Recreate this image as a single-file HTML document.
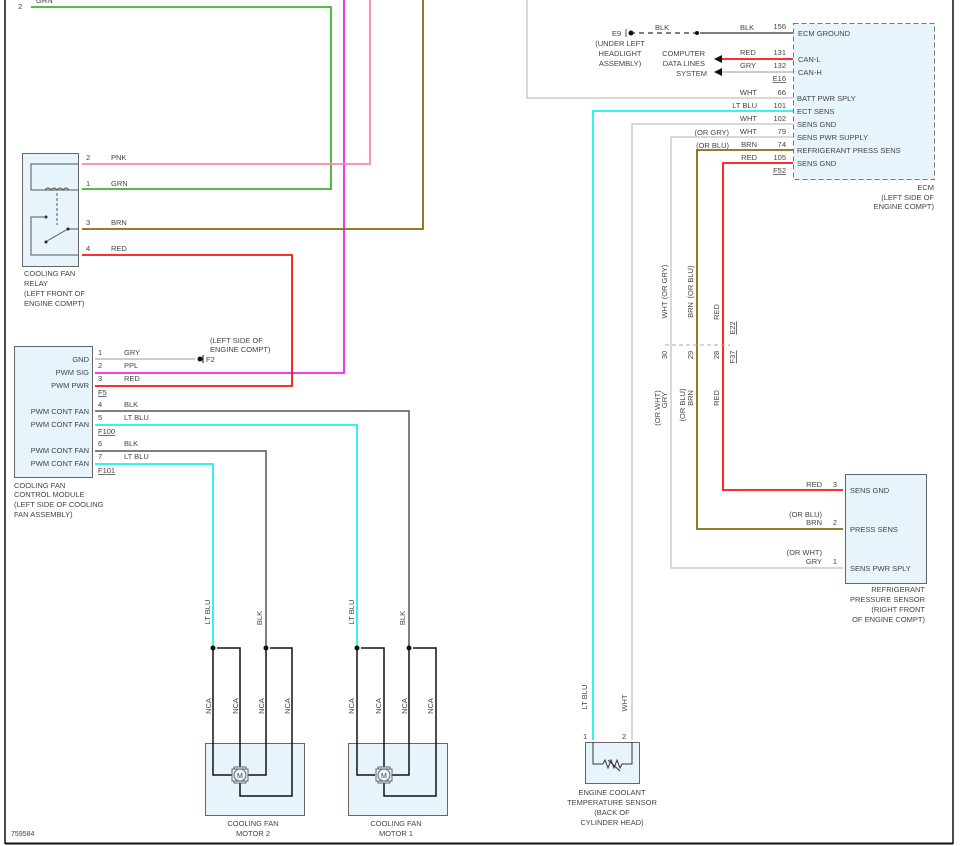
<!DOCTYPE html>
<html><head><meta charset="utf-8"><style>
html,body{margin:0;padding:0;background:#fff;}
svg{display:block;}
text{font-family:"Liberation Sans",sans-serif;font-size:7.5px;fill:#444;}
</style></head><body>
<svg width="967" height="846" viewBox="0 0 967 846" xmlns="http://www.w3.org/2000/svg">
<!-- frame -->
<line x1="5" y1="0" x2="5" y2="844" stroke="#111" stroke-width="1.5"/>
<line x1="953" y1="0" x2="953" y2="844" stroke="#111" stroke-width="1.5"/>
<line x1="5" y1="843.5" x2="953" y2="843.5" stroke="#111" stroke-width="2"/>

<!-- top-left wires -->
<text x="18" y="9">2</text><text x="36" y="3">GRN</text>
<polyline points="31,7 331,7 331,189 82,189" fill="none" stroke="#3cb52a" stroke-width="1.8"/>
<polyline points="344,0 344,373 95,373" fill="none" stroke="#ee22ee" stroke-width="1.8"/>
<polyline points="370,0 370,164 82,164" fill="none" stroke="#ff88aa" stroke-width="1.8"/>
<polyline points="423,0 423,229 82,229" fill="none" stroke="#8a6a10" stroke-width="1.8"/>
<polyline points="82,255 292,255 292,386 95,386" fill="none" stroke="#ff1111" stroke-width="1.8"/>

<!-- relay -->
<rect x="22.5" y="153.5" width="56" height="113" fill="#e8f4fb" stroke="#666"/>
<polyline points="78,164 31,164 31,190 78,190" fill="none" stroke="#555"/>
<path d="M45,190 q3,-4 6,0 q3,-4 6,0 q3,-4 6,0 q3,-4 6,0" fill="none" stroke="#555"/>
<line x1="57" y1="193" x2="57" y2="225" stroke="#555" stroke-dasharray="3,2"/>
<polyline points="78,229 68,229 47,241" fill="none" stroke="#555"/>
<circle cx="68" cy="229" r="1.5" fill="#222"/><circle cx="46" cy="242" r="1.5" fill="#222"/><circle cx="46" cy="217" r="1.5" fill="#222"/>
<polyline points="46,217 31,217 31,255 78,255" fill="none" stroke="#555"/>
<text x="86" y="160">2</text><text x="111" y="160">PNK</text>
<text x="86" y="186">1</text><text x="111" y="186">GRN</text>
<text x="86" y="225">3</text><text x="111" y="225">BRN</text>
<text x="86" y="251">4</text><text x="111" y="251">RED</text>
<text x="24" y="276">COOLING FAN</text><text x="24" y="286">RELAY</text>
<text x="24" y="296">(LEFT FRONT OF</text><text x="24" y="306">ENGINE COMPT)</text>

<!-- module -->
<rect x="14.5" y="346.5" width="78" height="131" fill="#e8f4fb" stroke="#666"/>
<line x1="95" y1="359" x2="195" y2="359" stroke="#bbb" stroke-width="1.5"/>
<circle cx="200" cy="359" r="2.5" fill="#111"/><line x1="203" y1="355" x2="203" y2="363" stroke="#111"/>
<text x="206" y="362">F2</text>
<text x="210" y="343">(LEFT SIDE OF</text><text x="210" y="352">ENGINE COMPT)</text>
<polyline points="95,411 409,411 409,648" fill="none" stroke="#555" stroke-width="1.5"/>
<polyline points="95,425 357,425 357,648" fill="none" stroke="#22eeee" stroke-width="1.8"/>
<polyline points="95,451 266,451 266,648" fill="none" stroke="#555" stroke-width="1.5"/>
<polyline points="95,464 213,464 213,648" fill="none" stroke="#22eeee" stroke-width="1.8"/>
<g text-anchor="end"><text x="89" y="362">GND</text><text x="89" y="375">PWM SIG</text><text x="89" y="388">PWM PWR</text>
<text x="89" y="414">PWM CONT FAN</text><text x="89" y="427">PWM CONT FAN</text>
<text x="89" y="453">PWM CONT FAN</text><text x="89" y="466">PWM CONT FAN</text></g>
<text x="98" y="355">1</text><text x="124" y="355">GRY</text>
<text x="98" y="368">2</text><text x="124" y="368">PPL</text>
<text x="98" y="381">3</text><text x="124" y="381">RED</text>
<text x="98" y="395" text-decoration="underline">F5</text>
<text x="98" y="407">4</text><text x="124" y="407">BLK</text>
<text x="98" y="420">5</text><text x="124" y="420">LT BLU</text>
<text x="98" y="434" text-decoration="underline">F100</text>
<text x="98" y="446">6</text><text x="124" y="446">BLK</text>
<text x="98" y="459">7</text><text x="124" y="459">LT BLU</text>
<text x="98" y="473" text-decoration="underline">F101</text>
<text x="14" y="488">COOLING FAN</text><text x="14" y="497">CONTROL MODULE</text>
<text x="14" y="507">(LEFT SIDE OF COOLING</text><text x="14" y="517">FAN ASSEMBLY)</text>

<!-- motors -->
<g id="m2">
<rect x="205.5" y="743.5" width="99" height="72" fill="#e8f4fb" stroke="#666"/>
<polyline points="213,648 213,775 232,775" fill="none" stroke="#111" stroke-width="1.5"/>
<polyline points="217,648 240,648 240,767" fill="none" stroke="#111" stroke-width="1.5"/>
<polyline points="266,648 266,775 248,775" fill="none" stroke="#111" stroke-width="1.5"/>
<polyline points="270,648 292,648 292,796 240,796 240,783" fill="none" stroke="#111" stroke-width="1.5"/>
<circle cx="213" cy="648" r="2.5" fill="#111"/><circle cx="266" cy="648" r="2.5" fill="#111"/>
<rect x="234" y="767" width="12" height="16" fill="#e8f4fb" stroke="#666"/>
<rect x="232" y="769" width="16" height="12" fill="#e8f4fb" stroke="#666"/>
<circle cx="240" cy="775" r="6" fill="#e8f4fb" stroke="#666"/>
<text x="237" y="778" style="font-size:7px">M</text>
<g style="font-size:7px">
<text transform="translate(210,612) rotate(-90)" text-anchor="middle">LT BLU</text>
<text transform="translate(262,618) rotate(-90)" text-anchor="middle">BLK</text>
<text transform="translate(211,706) rotate(-90)" text-anchor="middle">NCA</text>
<text transform="translate(238,706) rotate(-90)" text-anchor="middle">NCA</text>
<text transform="translate(264,706) rotate(-90)" text-anchor="middle">NCA</text>
<text transform="translate(290,706) rotate(-90)" text-anchor="middle">NCA</text>
</g>
<text x="253" y="826" text-anchor="middle">COOLING FAN</text><text x="253" y="836" text-anchor="middle">MOTOR 2</text>
</g>
<g transform="translate(143,0)">
<rect x="205.5" y="743.5" width="99" height="72" fill="#e8f4fb" stroke="#666"/>
<polyline points="214,648 214,775 232,775" fill="none" stroke="#111" stroke-width="1.5"/>
<polyline points="218,648 241,648 241,767" fill="none" stroke="#111" stroke-width="1.5"/>
<polyline points="266,648 266,775 249,775" fill="none" stroke="#111" stroke-width="1.5"/>
<polyline points="270,648 293,648 293,796 241,796 241,783" fill="none" stroke="#111" stroke-width="1.5"/>
<circle cx="214" cy="648" r="2.5" fill="#111"/><circle cx="266" cy="648" r="2.5" fill="#111"/>
<rect x="235" y="767" width="12" height="16" fill="#e8f4fb" stroke="#666"/>
<rect x="233" y="769" width="16" height="12" fill="#e8f4fb" stroke="#666"/>
<circle cx="241" cy="775" r="6" fill="#e8f4fb" stroke="#666"/>
<text x="238" y="778" style="font-size:7px">M</text>
<g style="font-size:7px">
<text transform="translate(211,612) rotate(-90)" text-anchor="middle">LT BLU</text>
<text transform="translate(262,618) rotate(-90)" text-anchor="middle">BLK</text>
<text transform="translate(211,706) rotate(-90)" text-anchor="middle">NCA</text>
<text transform="translate(238,706) rotate(-90)" text-anchor="middle">NCA</text>
<text transform="translate(264,706) rotate(-90)" text-anchor="middle">NCA</text>
<text transform="translate(290,706) rotate(-90)" text-anchor="middle">NCA</text>
</g>
<text x="253" y="826" text-anchor="middle">COOLING FAN</text><text x="253" y="836" text-anchor="middle">MOTOR 1</text>
</g>
<text x="11" y="836" style="font-size:7px">759584</text>

<!-- ECM -->
<polyline points="527,0 527,98 793,98" fill="none" stroke="#ccc" stroke-width="1.5"/>
<rect x="793.5" y="23.5" width="141" height="156" fill="#e8f4fb" stroke="#777" stroke-dasharray="5,3"/>
<line x1="630" y1="33" x2="700" y2="33" stroke="#555" stroke-width="1.5" stroke-dasharray="5,4"/>
<line x1="700" y1="33" x2="793" y2="33" stroke="#555" stroke-width="1.5"/>
<circle cx="631" cy="33" r="2.5" fill="#111"/><circle cx="697" cy="33" r="2" fill="#111"/>
<line x1="626" y1="29" x2="626" y2="37" stroke="#555"/>
<text x="612" y="36">E9</text>
<text x="620" y="46" text-anchor="middle">(UNDER LEFT</text><text x="620" y="56" text-anchor="middle">HEADLIGHT</text><text x="620" y="66" text-anchor="middle">ASSEMBLY)</text>
<text x="655" y="30">BLK</text><text x="740" y="30">BLK</text>
<line x1="720" y1="59" x2="793" y2="59" stroke="#ff1111" stroke-width="1.8"/>
<line x1="720" y1="72" x2="793" y2="72" stroke="#bbb" stroke-width="1.5"/>
<polygon points="714,59 722,55 722,63" fill="#111"/><polygon points="714,72 722,68 722,76" fill="#111"/>
<g text-anchor="end"><text x="705" y="56">COMPUTER</text><text x="705" y="66">DATA LINES</text><text x="707" y="76">SYSTEM</text></g>
<text x="740" y="55">RED</text><text x="740" y="68">GRY</text>
<g text-anchor="end">
<text x="786" y="29">156</text><text x="786" y="55">131</text><text x="786" y="68">132</text>
<text x="786" y="81" text-decoration="underline">E16</text>
<text x="786" y="95">66</text><text x="786" y="108">101</text><text x="786" y="121">102</text>
<text x="786" y="134">79</text><text x="786" y="147">74</text><text x="786" y="160">105</text>
<text x="786" y="173" text-decoration="underline">F52</text>
<text x="757" y="95">WHT</text><text x="757" y="108">LT BLU</text><text x="757" y="121">WHT</text>
<text x="757" y="134">WHT</text><text x="757" y="147">BRN</text><text x="757" y="160">RED</text>
<text x="729" y="135">(OR GRY)</text><text x="729" y="148">(OR BLU)</text>
<text x="934" y="190">ECM</text><text x="934" y="200">(LEFT SIDE OF</text><text x="934" y="209">ENGINE COMPT)</text>
</g>
<text x="798" y="36">ECM GROUND</text><text x="798" y="62">CAN-L</text><text x="798" y="75">CAN-H</text>
<text x="797" y="101">BATT PWR SPLY</text><text x="797" y="114">ECT SENS</text><text x="797" y="127">SENS GND</text>
<text x="797" y="140">SENS PWR SUPPLY</text><text x="797" y="153">REFRIGERANT PRESS SENS</text><text x="797" y="166">SENS GND</text>

<polyline points="793,111 593,111 593,740" fill="none" stroke="#22eeee" stroke-width="1.8"/>
<polyline points="793,124 632,124 632,740" fill="none" stroke="#ccc" stroke-width="1.5"/>
<polyline points="793,137 671,137 671,568 843,568" fill="none" stroke="#ccc" stroke-width="1.5"/>
<polyline points="793,150 697,150 697,529 843,529" fill="none" stroke="#8a6a10" stroke-width="1.8"/>
<polyline points="793,163 723,163 723,490 843,490" fill="none" stroke="#ff1111" stroke-width="1.8"/>
<line x1="665" y1="345" x2="730" y2="345" stroke="#aaa" stroke-dasharray="4,3"/>
<g style="font-size:7.5px">
<text transform="translate(667,310) rotate(-90)" text-anchor="middle">WHT</text>
<text transform="translate(667,282) rotate(-90)" text-anchor="middle">(OR GRY)</text>
<text transform="translate(693,310) rotate(-90)" text-anchor="middle">BRN</text>
<text transform="translate(693,282) rotate(-90)" text-anchor="middle">(OR BLU)</text>
<text transform="translate(719,312) rotate(-90)" text-anchor="middle">RED</text>
<text transform="translate(735,328) rotate(-90)" text-anchor="middle" text-decoration="underline">E22</text>
<text transform="translate(667,355) rotate(-90)" text-anchor="middle">30</text>
<text transform="translate(693,355) rotate(-90)" text-anchor="middle">29</text>
<text transform="translate(719,355) rotate(-90)" text-anchor="middle">28</text>
<text transform="translate(735,357) rotate(-90)" text-anchor="middle" text-decoration="underline">F37</text>
<text transform="translate(667,400) rotate(-90)" text-anchor="middle">GRY</text>
<text transform="translate(660,408) rotate(-90)" text-anchor="middle">(OR WHT)</text>
<text transform="translate(693,398) rotate(-90)" text-anchor="middle">BRN</text>
<text transform="translate(685,405) rotate(-90)" text-anchor="middle">(OR BLU)</text>
<text transform="translate(719,398) rotate(-90)" text-anchor="middle">RED</text>
</g>
<rect x="845.5" y="474.5" width="81" height="109" fill="#e8f4fb" stroke="#666"/>
<text x="850" y="493">SENS GND</text><text x="850" y="532">PRESS SENS</text><text x="850" y="571">SENS PWR SPLY</text>
<g text-anchor="end">
<text x="822" y="487">RED</text><text x="837" y="487">3</text>
<text x="822" y="517">(OR BLU)</text><text x="822" y="525">BRN</text><text x="837" y="525">2</text>
<text x="822" y="555">(OR WHT)</text><text x="822" y="564">GRY</text><text x="837" y="564">1</text>
<text x="925" y="592">REFRIGERANT</text><text x="925" y="602">PRESSURE SENSOR</text>
<text x="925" y="612">(RIGHT FRONT</text><text x="925" y="622">OF ENGINE COMPT)</text>
</g>

<!-- ECT sensor -->
<rect x="585.5" y="742.5" width="54" height="41" fill="#e8f4fb" stroke="#666"/>
<polyline points="593,742 593,764 603,764 605,760 608,768 611,760 614,768 617,760 620,768 622,764 632,764 632,742" fill="none" stroke="#333"/>
<line x1="608" y1="760" x2="620" y2="771" stroke="#333"/>
<g style="font-size:7px">
<text transform="translate(587,697) rotate(-90)" text-anchor="middle">LT BLU</text>
<text transform="translate(627,703) rotate(-90)" text-anchor="middle">WHT</text>
</g>
<text x="583" y="739">1</text><text x="622" y="739">2</text>
<g text-anchor="middle"><text x="612" y="795">ENGINE COOLANT</text><text x="612" y="805">TEMPERATURE SENSOR</text>
<text x="612" y="815">(BACK OF</text><text x="612" y="825">CYLINDER HEAD)</text></g>
</svg>
</body></html>
